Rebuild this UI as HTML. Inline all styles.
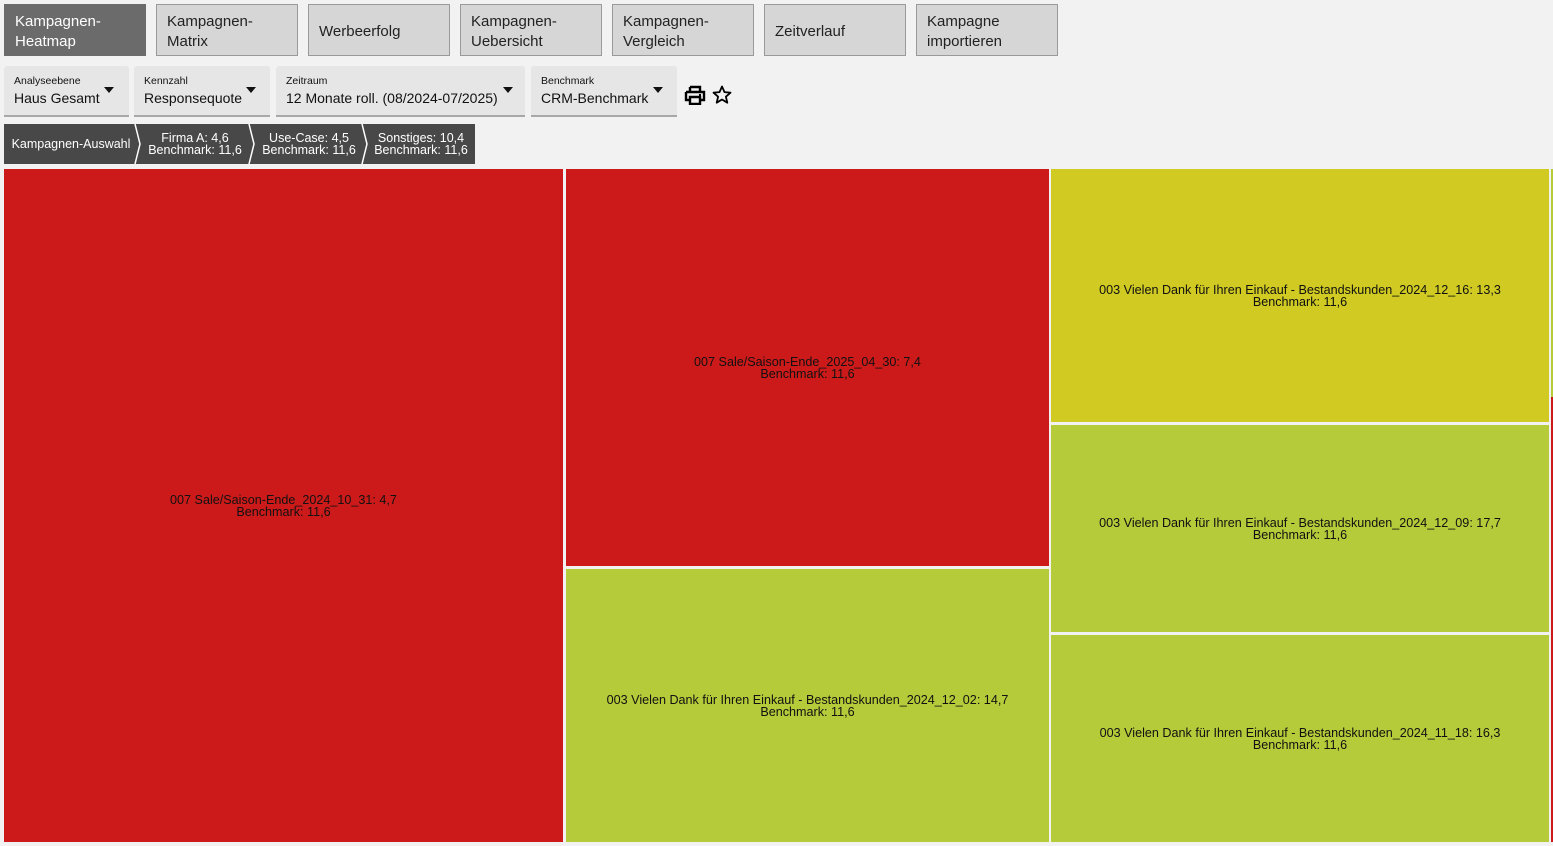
<!DOCTYPE html>
<html><head><meta charset="utf-8"><style>
*{box-sizing:border-box;margin:0;padding:0}
body{width:1553px;height:846px;background:#f2f2f2;font-family:"Liberation Sans",sans-serif;position:relative;overflow:hidden}
.b{position:absolute;top:4px;height:52px;width:142px;background:#d6d6d6;border:1px solid #9a9a9a;font-size:15px;color:#222;line-height:20px;padding:9px 10px 5px;display:flex;align-items:center}
.b.a{background:#6b6b6b;color:#fff;border-color:#6b6b6b}
.d{position:absolute;top:66px;height:51px;background:#e6e6e6;border-bottom:2px solid #a8a8a8;padding:9px 10px;color:#111;border-radius:3px 3px 0 0}
.d small{display:block;font-size:10.5px;line-height:13px}
.d span{font-size:14px;line-height:20px}
.d i{position:absolute;top:21px;border-left:5px solid transparent;border-right:5px solid transparent;border-top:6px solid #111}
.bc{position:absolute;left:4px;top:124px;width:471px;height:40px;background:#484848;color:#fff;font-size:12px;line-height:12px}
.bc div{position:absolute;top:0;height:40px;display:flex;flex-direction:column;justify-content:center;text-align:center}
.r{position:absolute;display:flex;flex-direction:column;justify-content:center;align-items:center;text-align:center;font-size:12.6px;line-height:12px;color:#111}
.red{background:#cc1a1a}.yel{background:#d0ca23}.grn{background:#b5cb3a}
</style></head><body>
<div class="b a" style="left:4px">Kampagnen-<br>Heatmap</div>
<div class="b" style="left:156px">Kampagnen-<br>Matrix</div>
<div class="b" style="left:308px">Werbeerfolg</div>
<div class="b" style="left:460px">Kampagnen-<br>Uebersicht</div>
<div class="b" style="left:612px">Kampagnen-<br>Vergleich</div>
<div class="b" style="left:764px">Zeitverlauf</div>
<div class="b" style="left:916px">Kampagne<br>importieren</div>

<div class="d" style="left:4px;width:125px"><small>Analyseebene</small><span>Haus Gesamt</span><i style="left:100px"></i></div>
<div class="d" style="left:134px;width:136px"><small>Kennzahl</small><span>Responsequote</span><i style="left:112px"></i></div>
<div class="d" style="left:276px;width:249px"><small>Zeitraum</small><span>12 Monate roll. (08/2024-07/2025)</span><i style="left:227px"></i></div>
<div class="d" style="left:531px;width:146px"><small>Benchmark</small><span>CRM-Benchmark</span><i style="left:122px"></i></div>
<svg style="position:absolute;left:684px;top:85px" width="22" height="20" viewBox="0 0 22 20"><path d="M6 2h10v4M6 6V2M2 7h18v8h-4M6 15H2V7M6 12h10v7H6z" fill="none" stroke="#000" stroke-width="2.4"/><rect x="15" y="9" width="2" height="2" fill="#000"/></svg>
<svg style="position:absolute;left:712px;top:85px" width="20" height="20" viewBox="0 0 20 20"><path d="M10 1.5l2.5 5.6 6 .6-4.6 4 1.4 6-5.3-3.2-5.3 3.2 1.4-6-4.6-4 6-.6z" fill="none" stroke="#000" stroke-width="1.8" stroke-linejoin="round"/></svg>

<div class="bc">
<div style="left:4px;width:126px;font-size:12.5px">Kampagnen-Auswahl</div>
<div style="left:136px;width:110px;font-size:12.5px">Firma A: 4,6<br>Benchmark: 11,6</div>
<div style="left:250px;width:110px;font-size:12.5px">Use-Case: 4,5<br>Benchmark: 11,6</div>
<div style="left:363px;width:108px;font-size:12.5px">Sonstiges: 10,4<br>Benchmark: 11,6</div>
<svg style="position:absolute;left:0;top:0" width="471" height="40"><g fill="none" stroke="#fff" stroke-width="1.5"><path d="M131 0l5 20-5 20M245 0l5 20-5 20M358 0l5 20-5 20"/></g></svg>
</div>

<div class="r red" style="left:4px;top:169px;width:559px;height:673px">007 Sale/Saison-Ende_2024_10_31: 4,7<br>Benchmark: 11,6</div>
<div class="r red" style="left:566px;top:169px;width:483px;height:397px">007 Sale/Saison-Ende_2025_04_30: 7,4<br>Benchmark: 11,6</div>
<div class="r grn" style="left:566px;top:569px;width:483px;height:273px">003 Vielen Dank für Ihren Einkauf - Bestandskunden_2024_12_02: 14,7<br>Benchmark: 11,6</div>
<div class="r yel" style="left:1051px;top:169px;width:498px;height:253px">003 Vielen Dank für Ihren Einkauf - Bestandskunden_2024_12_16: 13,3<br>Benchmark: 11,6</div>
<div class="r grn" style="left:1051px;top:425px;width:498px;height:207px">003 Vielen Dank für Ihren Einkauf - Bestandskunden_2024_12_09: 17,7<br>Benchmark: 11,6</div>
<div class="r grn" style="left:1051px;top:635px;width:498px;height:207px">003 Vielen Dank für Ihren Einkauf - Bestandskunden_2024_11_18: 16,3<br>Benchmark: 11,6</div>
<div style="position:absolute;left:1551px;top:169px;width:2px;height:228px;background:#b5cb3a"></div>
<div style="position:absolute;left:1551px;top:397px;width:2px;height:445px;background:#cc1a1a"></div>
</body></html>
